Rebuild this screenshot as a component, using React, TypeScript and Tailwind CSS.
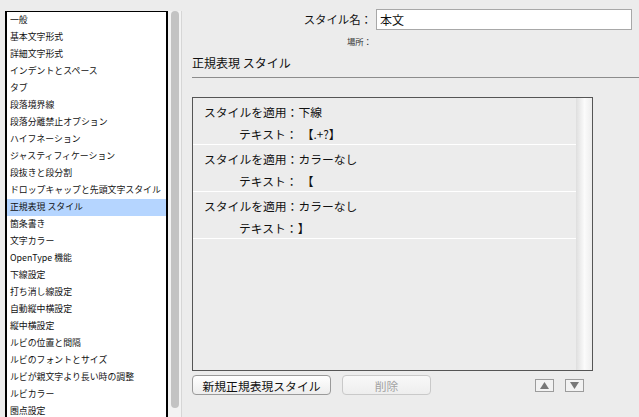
import React from "react";

const categories = [
  "一般",
  "基本文字形式",
  "詳細文字形式",
  "インデントとスペース",
  "タブ",
  "段落境界線",
  "段落分離禁止オプション",
  "ハイフネーション",
  "ジャスティフィケーション",
  "段抜きと段分割",
  "ドロップキャップと先頭文字スタイル",
  "正規表現 スタイル",
  "箇条書き",
  "文字カラー",
  "OpenType 機能",
  "下線設定",
  "打ち消し線設定",
  "自動縦中横設定",
  "縦中横設定",
  "ルビの位置と間隔",
  "ルビのフォントとサイズ",
  "ルビが親文字より長い時の調整",
  "ルビカラー",
  "圏点設定",
];

const grepStyles = [
  { style: "下線", text: "【.+?】", gap: true },
  { style: "カラーなし", text: "【", gap: true },
  { style: "カラーなし", text: "】", gap: false },
];

const font = { fontFamily: "'Noto Sans CJK JP', 'Liberation Sans', sans-serif" };

export default function App() {
  return (
    <div
      className="w-[639px] h-[417px] bg-[#ececec] flex overflow-hidden text-[#111]"
      style={font}
    >
      {/* Category list */}
      <div className="flex pl-[5px] pt-[11px] shrink-0">
        <div className="w-[163px] h-[420px] bg-white border-t border-l-2 border-r-2 border-black overflow-hidden">
          {categories.map((c, i) => (
            <div
              key={c}
              className={`h-[17px] flex items-center pl-[3px] text-[8.9px] leading-none whitespace-nowrap ${
                i === 11 ? "bg-[#b5d5ff]" : ""
              }`}
            >
              {c}
            </div>
          ))}
        </div>
        <div className="w-[14px] h-[420px] bg-[#f3f3f3] border-r border-[#d6d6d6] flex justify-center">
          <div className="w-[8px] h-[397px] rounded-full bg-[#c3c3c3]" />
        </div>
      </div>

      {/* Settings pane */}
      <div className="flex-1 flex flex-col pl-[10px]">
        <div className="grid grid-cols-[180px_1fr] items-center pt-[9px] pr-[7px]">
          <div className="text-right text-[11.4px] leading-none">スタイル名：</div>
          <div className="ml-[4px] h-[21px] bg-white border border-[#a8a8a8] flex items-center px-[3px] text-[12px]">
            本文
          </div>
          <div className="text-right text-[8.4px] leading-none mt-[7px] text-[#333]">場所：</div>
          <div />
        </div>

        <div className="mt-[12px] text-[12px] leading-none pb-[8px] border-b border-[#8c8c8c]">
          正規表現 スタイル
        </div>

        <div className="mt-[19px] w-[401px] h-[274px] border border-[#555] flex">
          <div className="flex-1">
            {grepStyles.map((g, i) => (
              <div key={i} className="h-[47px] border-b border-white pt-[2px] text-[11.8px]">
                <div className="h-[22px] flex items-center pl-[11px]">
                  スタイルを適用：{g.style}
                </div>
                <div className="h-[22px] flex items-center pl-[46px]">
                  テキスト：<span className={g.gap ? "ml-[4px]" : ""}>{g.text}</span>
                </div>
              </div>
            ))}
          </div>
          <div className="w-[16px] bg-gradient-to-r from-[#e2e2e2] via-[#fbfbfb] to-[#ededed] border-l border-[#e0e0e0]" />
        </div>

        <div className="flex items-center mt-[4px] w-[401px]">
          <button className="w-[139px] h-[20px] rounded-[4px] border border-[#9a9a9a] bg-gradient-to-b from-white to-[#ededed] text-[11.8px] leading-none flex items-center justify-center">
            新規正規表現スタイル
          </button>
          <button className="ml-[11px] w-[89px] h-[20px] rounded-[4px] border border-[#c9c9c9] bg-gradient-to-b from-[#f8f8f8] to-[#eeeeee] text-[11.8px] leading-none text-[#a3a3a3] flex items-center justify-center">
            削除
          </button>
          <div className="ml-auto flex items-center gap-[11px] mr-[9px]">
            <div className="w-[19px] h-[13px] border border-[#9c9c9c] bg-[#f2f2f2] flex items-center justify-center">
              <svg width="9" height="7" viewBox="0 0 9 7">
                <path d="M4.5 0 L9 7 L0 7 Z" fill="#777" />
              </svg>
            </div>
            <div className="w-[19px] h-[13px] border border-[#9c9c9c] bg-[#f2f2f2] flex items-center justify-center">
              <svg width="9" height="7" viewBox="0 0 9 7">
                <path d="M0 0 L9 0 L4.5 7 Z" fill="#777" />
              </svg>
            </div>
          </div>
        </div>
      </div>
    </div>
  );
}
